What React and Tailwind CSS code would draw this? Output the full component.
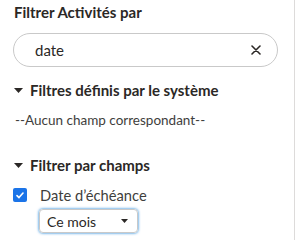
import React from "react";

function Caret() {
  return (
    <svg width="9" height="5" viewBox="0 0 9 5" className="shrink-0">
      <path d="M0 0h9L4.5 5z" fill="#2b2826" />
    </svg>
  );
}

function App() {
  return (
    <div className="w-[297px] h-[240px] bg-white flex font-['Lato',sans-serif] text-[#2b2826] overflow-hidden">
      <div className="w-[295px] border-r border-[#dddbda] pl-[13px] pr-[16px] pt-[3px]">
        <h2 className="text-[15px] font-bold leading-[18px] pl-[1px]">Filtrer Activités par</h2>

        <div className="mt-[12px] h-[34px] rounded-full border border-[#c9c9c9] flex items-center pl-[21px] pr-[16px]">
          <span className="flex-1 text-[15px]">date</span>
          <svg width="10" height="10" viewBox="0 0 10 10">
            <path d="M1 1l8 8M9 1l-8 8" stroke="#2b2826" strokeWidth="1.6" strokeLinecap="round" />
          </svg>
        </div>

        <div className="mt-[14px] flex items-center gap-[7px] pl-[1px]">
          <Caret />
          <span className="text-[15px] font-bold leading-[19px]">Filtres définis par le système</span>
        </div>

        <p className="mt-[12px] text-[13.5px] leading-[17px] pl-[2px] text-[#3e3e3c]">--Aucun champ correspondant--</p>

        <div className="mt-[27px] flex items-center gap-[7px] pl-[1px]">
          <Caret />
          <span className="text-[15px] font-bold leading-[19px]">Filtrer par champs</span>
        </div>

        <label className="mt-[11px] flex items-center gap-[13px]">
          <span className="w-[14px] h-[14px] rounded-[2px] bg-[#1b74e8] flex items-center justify-center">
            <svg width="8" height="7" viewBox="0 0 8 7">
              <path d="M1 3.6l2 2 4-4.6" stroke="white" strokeWidth="1.6" fill="none" strokeLinecap="round" strokeLinejoin="round" />
            </svg>
          </span>
          <span className="text-[14.7px] leading-[18px] text-[#3e3e3c]">Date d’échéance</span>
        </label>

        <div className="mt-[5px] ml-[26px] w-[99px] h-[24px] rounded-[4px] border border-[#c9c9c9] shadow-[0_0_3px_#0176d3] flex items-center pl-[7px] pr-[9px]">
          <span className="flex-1 text-[14px]">Ce mois</span>
          <svg width="7" height="4" viewBox="0 0 7 4">
            <path d="M0 0h7L3.5 4z" fill="#2b2826" />
          </svg>
        </div>
      </div>
    </div>
  );
}

export default App;
